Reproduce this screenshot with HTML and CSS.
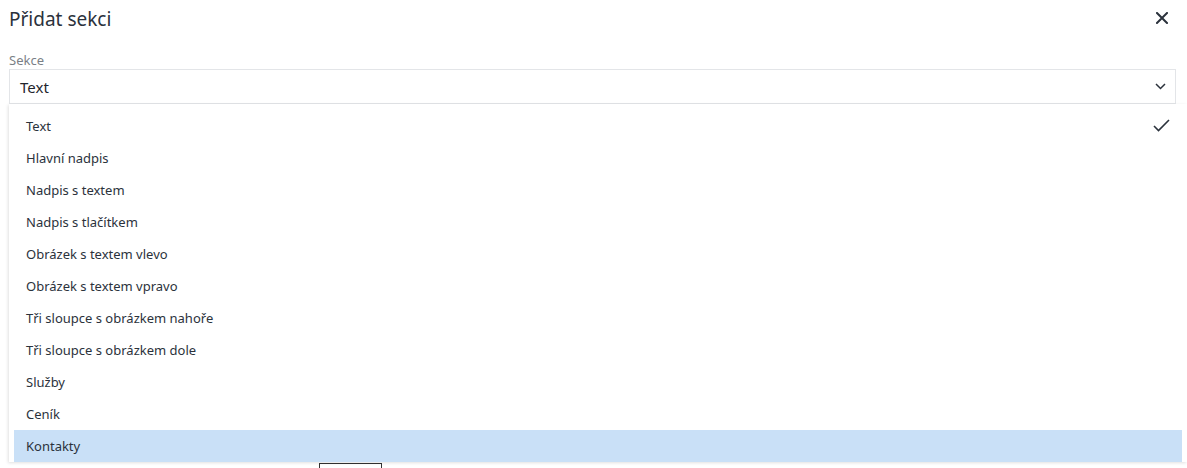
FILE: index.html
```html
<!DOCTYPE html>
<html lang="cs">
<head>
<meta charset="utf-8">
<title>Přidat sekci</title>
<link rel="stylesheet" href="styles.css">
</head>
<body>
<div class="dialog">
  <div class="header">
    <h1 class="title">Přidat sekci</h1>
    <button class="close" aria-label="Zavřít">
      <svg width="12" height="12" viewBox="0 0 12 12"><path d="M1 1L11 11M11 1L1 11" stroke="#2b323c" stroke-width="2" stroke-linecap="square"/></svg>
    </button>
  </div>
  <div class="field">
    <label class="label">Sekce</label>
    <div class="select-wrap">
      <div class="select">
        <span>Text</span>
        <svg class="chev" width="11" height="7" viewBox="0 0 11 7"><path d="M1 1L5.5 5.5L10 1" fill="none" stroke="#2b323c" stroke-width="1.5"/></svg>
      </div>
      <ul class="menu">
        <li class="item">Text<svg class="check" width="17" height="13" viewBox="0 0 17 13"><path d="M1 7L5.5 11.5L16 1" fill="none" stroke="#2b323c" stroke-width="1.6"/></svg></li>
        <li class="item">Hlavní nadpis</li>
        <li class="item">Nadpis s textem</li>
        <li class="item">Nadpis s tlačítkem</li>
        <li class="item">Obrázek s textem vlevo</li>
        <li class="item">Obrázek s textem vpravo</li>
        <li class="item">Tři sloupce s obrázkem nahoře</li>
        <li class="item">Tři sloupce s obrázkem dole</li>
        <li class="item">Služby</li>
        <li class="item">Ceník</li>
        <li class="item active">Kontakty</li>
      </ul>
    </div>
  </div>
  <div class="below">
    <div class="under-btn"></div>
  </div>
</div>
</body>
</html>
```
FILE: styles.css
```css
* { box-sizing: border-box; }
html, body { margin: 0; padding: 0; background: #fff; overflow: hidden; }
body { font-family: "Noto Sans", "Open Sans", sans-serif; color: #2b323c; }
.dialog { width: 1187px; height: 468px; overflow: hidden; }
.header { display: flex; align-items: center; justify-content: space-between; height: 38px; padding: 0 18px 0 9px; }
.title { margin: 0; font-size: 19px; font-weight: 400; color: #2b323c; line-height: 26px; }
.close { border: 0; background: none; padding: 0; width: 14px; height: 14px; display: flex; align-items: center; justify-content: center; margin-top: -2px; }
.field { padding: 13px 11px 0 9px; }
.label { display: block; font-size: 13px; color: #7a7f86; line-height: 18px; }
.select-wrap { position: relative; }
.select { height: 35px; border: 1px solid #e3e5e8; display: flex; align-items: center; justify-content: space-between; padding: 0 8px 0 10px; font-size: 15px; color: #1f252d; }
.chev { margin-right: 1px; }
.menu { position: absolute; top: 35px; left: 0; width: 1178px; margin: 0; padding: 6px 5px 0; list-style: none; background: #fff; box-shadow: -1px 1px 3px rgba(0,0,0,0.12); z-index: 2; }
.item { height: 32px; display: flex; align-items: center; justify-content: space-between; padding: 0 12px 0 12px; font-size: 13px; color: #2b323c; }
.item.active { background: #c9e0f7; }
.check { margin-top: -1px; }
.below { padding: 359px 0 0 319px; }
.under-btn { width: 63px; height: 5px; border: 1px solid #333; border-bottom: 0; }
```
